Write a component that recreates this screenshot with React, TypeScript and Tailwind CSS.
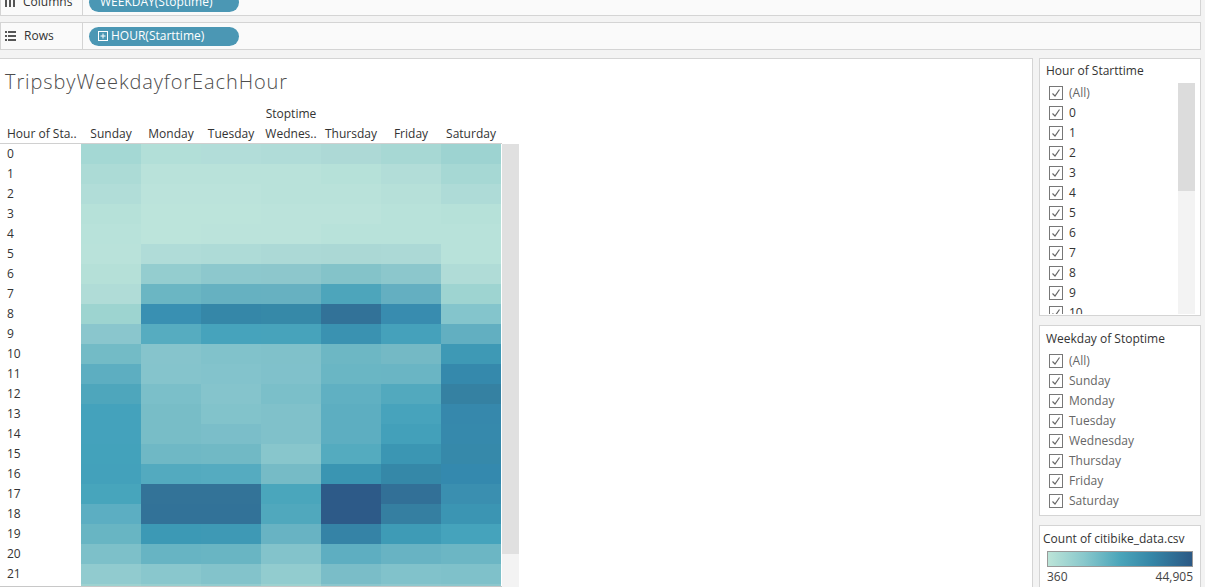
import React from 'react';

const cells: string[][] = [
  ['#a4d8d4', '#b2dfd8', '#b2ddd9', '#b0dcd8', '#add9d6', '#a7d8d4', '#9dd3d1'],
  ['#acdbd6', '#b9e2da', '#b9e2da', '#b9e2da', '#b6e1d9', '#b2ddd8', '#a6d8d4'],
  ['#b1ddd8', '#bbe3db', '#bbe3db', '#b9e2da', '#b9e2da', '#b6e0d9', '#aedbd7'],
  ['#b6e1d9', '#bce4db', '#bce4db', '#bbe3db', '#bbe3db', '#b8e2da', '#b6e1d9'],
  ['#b8e2da', '#bce4db', '#bbe3db', '#bbe3db', '#b8e2da', '#b8e2da', '#b8e2da'],
  ['#b9e2da', '#b0dcd8', '#aedbd7', '#acd9d6', '#abd8d5', '#acd9d6', '#b8e2da'],
  ['#b5e0d8', '#94cdcf', '#8dc8cd', '#8dc7cc', '#84c3c9', '#8cc7cc', '#b0dcd7'],
  ['#b0dcd7', '#6bb6c3', '#66b1c1', '#67b1c1', '#4da5bb', '#64afc1', '#9ed4d1'],
  ['#9dd4d0', '#3990b2', '#3587a8', '#3689a8', '#327298', '#388caf', '#84c5cc'],
  ['#8ac6cd', '#56acc0', '#46a3bc', '#47a3bb', '#3a92b1', '#45a1bb', '#62afc1'],
  ['#73bbc6', '#86c4cc', '#81c2cb', '#80c1ca', '#6db7c4', '#74b9c5', '#3e99b5'],
  ['#5daec1', '#85c4cc', '#83c3cc', '#80c1cb', '#6ab6c4', '#6ab5c4', '#3589ac'],
  ['#4ea6bc', '#7bbfc9', '#85c4cc', '#7bbfc9', '#60b0c2', '#52a9be', '#3581a2'],
  ['#44a2bc', '#78bdc7', '#82c3cb', '#80c1ca', '#5daec1', '#47a3bc', '#3688ac'],
  ['#44a2bc', '#78bdc7', '#7bbec9', '#80c1ca', '#5daec1', '#43a0ba', '#3689ac'],
  ['#43a2bb', '#6fb8c5', '#71b9c5', '#88c6cc', '#54abbf', '#3b96b3', '#3689aa'],
  ['#43a1bb', '#53aabf', '#55abc0', '#76bbc6', '#3a95b2', '#3588a8', '#3489ae'],
  ['#47a5bc', '#337398', '#337398', '#4aa6bc', '#2d5a88', '#327097', '#3a8fb0'],
  ['#5caec2', '#327298', '#327298', '#50a8bd', '#2d5a88', '#357fa1', '#3b95b3'],
  ['#68b5c3', '#3c99b5', '#3e99b5', '#68b3c3', '#3583a6', '#3e9bb6', '#45a3bc'],
  ['#7dc0c9', '#67b4c3', '#69b5c3', '#83c3cb', '#5eaec1', '#68b3c3', '#6cb6c4'],
  ['#91cbcf', '#89c7cd', '#83c3cb', '#92cccf', '#7abdc8', '#81c2cb', '#7fc1ca'],
  ['#9dd2d0', '#97cfcf', '#92cccf', '#9dd2d0', '#8ac6cd', '#8ec8ce', '#8cc7cd'],
];

const days = ['Sunday', 'Monday', 'Tuesday', 'Wednes..', 'Thursday', 'Friday', 'Saturday'];

const ColumnsIcon = () => (
  <svg width="10" height="10" viewBox="0 0 10 10" fill="#555">
    <rect x="0" y="0" width="2" height="10" />
    <rect x="4" y="0" width="2" height="10" />
    <rect x="8" y="0" width="2" height="10" />
  </svg>
);

const RowsIcon = () => (
  <svg width="11" height="10" viewBox="0 0 11 10" fill="#555">
    <rect x="0" y="0" width="2" height="2" />
    <rect x="3" y="0" width="8" height="2" />
    <rect x="0" y="4" width="2" height="2" />
    <rect x="3" y="4" width="8" height="2" />
    <rect x="0" y="8" width="2" height="2" />
    <rect x="3" y="8" width="8" height="2" />
  </svg>
);

const PlusBox = () => (
  <svg width="10" height="10" viewBox="0 0 10 10" fill="none" stroke="white" strokeWidth="1">
    <rect x="0.5" y="0.5" width="9" height="9" />
    <path d="M5 2.5 V7.5 M2.5 5 H7.5" />
  </svg>
);

const Shelf: React.FC<{ label: string; icon: React.ReactNode; pill: React.ReactNode; className?: string }> = ({
  label,
  icon,
  pill,
  className,
}) => (
  <div className={`flex h-[28px] border border-[#d4d4d4] bg-[#fafafa] ${className ?? ''}`}>
    <div className="flex w-[82px] items-center gap-[8px] border-r border-[#d4d4d4] pl-[4px] text-[12px] text-[#333]">
      {icon}
      <span>{label}</span>
    </div>
    <div className="flex items-center pl-[6px]">
      <div className="flex h-[19px] w-[150px] items-center gap-[3px] rounded-full bg-[#4b97b4] pl-[9px] text-[12px] text-white">
        {pill}
      </div>
    </div>
  </div>
);

const Check = () => (
  <div className="flex h-[14px] w-[14px] items-center justify-center border border-[#777] bg-white">
    <svg width="10" height="10" viewBox="0 0 10 10" fill="none" stroke="#666" strokeWidth="1.2">
      <path d="M1.5 5.5 L4 8 L8.5 1.5" />
    </svg>
  </div>
);

const CheckItem: React.FC<{ label: string; muted?: boolean }> = ({ label, muted }) => (
  <div className="flex h-[20px] items-center gap-[6px] pl-[9px]">
    <Check />
    <span className={`text-[12px] ${muted ? 'text-[#666]' : 'text-[#333]'}`}>{label}</span>
  </div>
);

export default function App() {
  const hours = Array.from({ length: 12 }, (_, i) => String(i));
  const weekdays = ['Sunday', 'Monday', 'Tuesday', 'Wednesday', 'Thursday', 'Friday', 'Saturday'];

  return (
    <div
      className="h-[587px] w-[1205px] overflow-hidden bg-[#f3f3f3]"
      style={{ fontFamily: '"Open Sans", "Noto Sans", sans-serif' }}
    >
      <div className="-mt-[12px] flex w-[1201px] flex-col gap-[6px]">
        <Shelf label="Columns" icon={<ColumnsIcon />} pill={<span className="pl-[2px]">WEEKDAY(Stoptime)</span>} />
        <Shelf
          label="Rows"
          icon={<RowsIcon />}
          pill={
            <>
              <PlusBox />
              <span>HOUR(Starttime)</span>
            </>
          }
        />
      </div>

      <div className="mt-[8px] flex gap-[6px]">
        {/* viewport */}
        <div className="h-[540px] w-[1033px] border border-l-0 border-[#d4d4d4] bg-white">
          <div className="pl-[5px] pt-[8px] text-[20px] font-light leading-[30px] tracking-[0.9px] text-[#4d4d4d]">
            TripsbyWeekdayforEachHour
          </div>
          <div className="mt-[7px] flex h-[20px] items-center">
            <div className="w-[501px] pl-[81px] text-center text-[12px] text-[#333]">Stoptime</div>
          </div>
          <div className="flex h-[20px] w-[502px] items-center border-b border-[#d0d0d0] text-[12px] text-[#333]">
            <div className="w-[81px] pl-[7px]">Hour of Sta..</div>
            {days.map((d) => (
              <div key={d} className="w-[60px] text-center">
                {d}
              </div>
            ))}
          </div>
          <div className="flex">
            <div className="h-[443px] w-[502px] overflow-hidden border-b border-[#c8c8c8]">
              {cells.map((row, i) => (
                <div key={i} className="flex h-[20px]">
                  <div className="flex w-[81px] items-center pl-[7px] text-[12px] text-[#333]">{i}</div>
                  {row.map((c, j) => (
                    <div key={j} className="h-[20px] w-[60px]" style={{ backgroundColor: c }} />
                  ))}
                </div>
              ))}
            </div>
            <div className="flex w-[17px] flex-col">
              <div className="h-[410px] bg-[#e0e0e0]" />
              <div className="flex-1 bg-[#f3f3f3]" />
            </div>
          </div>
        </div>

        {/* side panel */}
        <div className="flex w-[162px] flex-col gap-[9px]">
          <div className="h-[258px] border border-[#d4d4d4] bg-white">
            <div className="flex h-[24px] items-center pl-[6px] text-[12px] text-[#333]">Hour of Starttime</div>
            <div className="flex">
              <div className="h-[231px] flex-1 overflow-hidden">
                <CheckItem label="(All)" muted />
                {hours.map((h) => (
                  <CheckItem key={h} label={h} />
                ))}
              </div>
              <div className="mr-[5px] flex w-[17px] flex-col">
                <div className="h-[108px] bg-[#dcdcdc]" />
                <div className="flex-1 bg-[#f3f3f3]" />
              </div>
            </div>
          </div>

          <div className="h-[191px] border border-[#d4d4d4] bg-white">
            <div className="flex h-[25px] items-center pl-[6px] text-[12px] text-[#333]">Weekday of Stoptime</div>
            <CheckItem label="(All)" muted />
            {weekdays.map((w) => (
              <CheckItem key={w} label={w} muted />
            ))}
          </div>

          <div className="h-[80px] border border-[#d4d4d4] bg-white">
            <div className="flex h-[25px] items-center pl-[3px] text-[12px] text-[#333]">Count of citibike_data.csv</div>
            <div className="px-[7px]">
              <div className="h-[16px] w-full border border-[#999] bg-[linear-gradient(to_right,#bce4d8,#89c8cc_25%,#4ba5ba_50%,#3586a7_72%,#2c5985)]" />
              <div className="flex justify-between text-[12px] leading-[20px] text-[#444]">
                <span>360</span>
                <span>44,905</span>
              </div>
            </div>
          </div>
        </div>
      </div>
    </div>
  );
}
